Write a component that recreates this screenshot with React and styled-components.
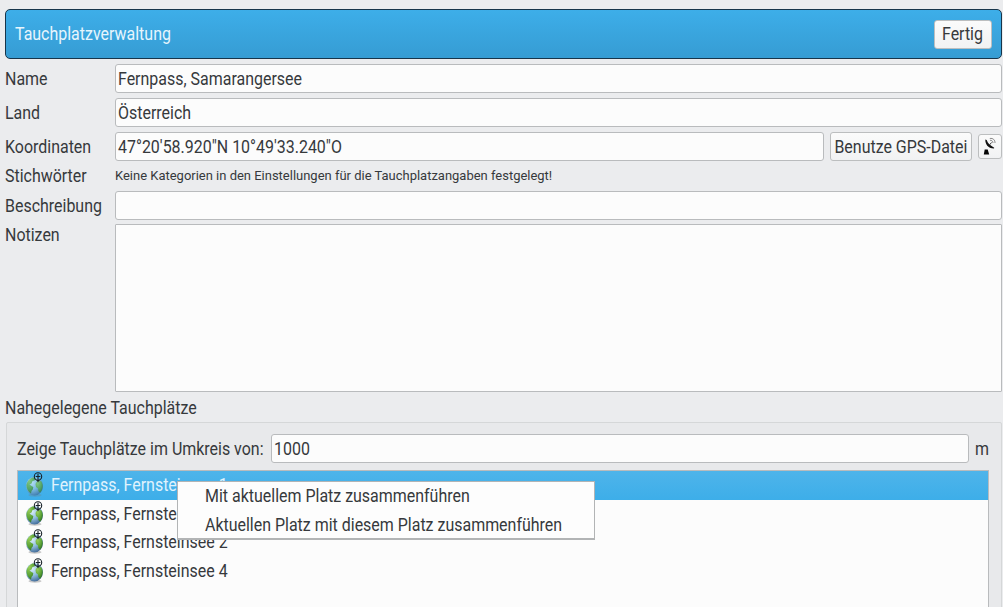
import React from "react";
import styled, { createGlobalStyle } from "styled-components";

const Global = createGlobalStyle`
  * { box-sizing: border-box; }
  html, body { margin: 0; height: 100%; overflow: hidden; background: #ebecee; }
  body { font-family: Roboto, "Liberation Sans", sans-serif; font-size: 17px; color: #36393c; }
`;

const Window = styled.main`
  width: 1003px;
  height: 607px;
  overflow: hidden;
  padding: 9px 1.5px 0 5px;
  display: flex;
  flex-direction: column;
`;

const Text = styled.span`
  display: inline-block;
  flex: none;
  font-size: ${(p) => p.$size || 17.5}px;
  line-height: ${(p) => p.$line || 22}px;
  white-space: nowrap;
  transform: translateY(-0.5px) scaleX(${(p) => p.$fit || 0.912});
  transform-origin: ${(p) => p.$origin || "left"} center;
`;

const TitleBar = styled.header`
  height: 50px;
  flex: none;
  display: flex;
  align-items: center;
  justify-content: space-between;
  padding: 0 9px 0 9px;
  border: 1px solid #17354a;
  border-radius: 5px;
  background: linear-gradient(#3daee9, #369cd3);
  color: #e6f5fd;
`;

const Button = styled.button`
  width: ${(p) => p.$w}px;
  height: ${(p) => p.$h}px;
  flex: none;
  padding: 0;
  display: flex;
  align-items: center;
  justify-content: center;
  border: 1px solid #bcbebf;
  border-radius: 3px;
  background: linear-gradient(#fbfbfb, #f1f2f3);
  color: #36393c;
  font-family: inherit;
`;

const Form = styled.section`
  flex: none;
  padding-top: 5px;
`;

const FormRow = styled.div`
  display: flex;
  align-items: ${(p) => (p.$top ? "flex-start" : "center")};
  height: ${(p) => p.$h}px;
  margin-bottom: ${(p) => p.$gap || 0}px;
`;

const Label = styled.label`
  width: 110px;
  flex: none;
  display: flex;
`;

const Field = styled.div`
  flex: 1;
  height: ${(p) => p.$h || 29}px;
  display: flex;
  align-items: center;
  padding-left: 2px;
  border: 1px solid #b9bbbd;
  border-radius: 3px;
  background: #fcfcfc;
`;

const Notes = styled(Field)`
  border-radius: 1px;
`;

const ButtonGroup = styled.div`
  display: flex;
  align-items: center;
  gap: 6px;
  margin-left: 6px;
`;

const SectionTitle = styled.h2`
  margin: 5px 0 0;
  height: 25px;
  font-weight: 400;
  display: flex;
  flex: none;
`;

const GroupBox = styled.section`
  flex: 1;
  margin: 0 0 -4px 1px;
  padding: 11px 12px 0 10px;
  display: flex;
  flex-direction: column;
  border: 1px solid #d5d7d8;
  border-radius: 2px;
  background: #e8e9eb;
`;

const RangeRow = styled.div`
  display: flex;
  align-items: center;
  height: 29px;
  flex: none;
`;

const RangeLabel = styled.div`
  width: 254px;
  flex: none;
  display: flex;
`;

const Unit = styled.div`
  width: 20px;
  padding-left: 6px;
  display: flex;
`;

const SiteList = styled.ul`
  position: relative;
  flex: 1;
  margin: 7px 0 0;
  padding: 0;
  list-style: none;
  border: 1px solid #b9bbbd;
  background: #fcfcfc;
`;

const Site = styled.li`
  height: 28.5px;
  display: flex;
  align-items: center;
  padding-left: 6.5px;
  background: ${(p) => (p.$selected ? "linear-gradient(#4eb4ea, #3daee9)" : "none")};
  color: ${(p) => (p.$selected ? "#e0f3fd" : "#36393c")};
  svg { flex: none; margin-right: 6.5px; }
`;

const Menu = styled.div`
  position: absolute;
  left: 159px;
  top: 10px;
  width: 418px;
  height: 59px;
  border: 1px solid #b2b4b5;
  border-bottom-width: 2px;
  background: #fdfdfd;
`;

const MenuItem = styled.div`
  height: 29px;
  display: flex;
  align-items: center;
  padding: 0 0 2px 27px;
`;

const Globe = ({ selected }) => (
  <svg width="20" height="28" viewBox="0 0 20 28">
    <defs>
      <radialGradient id="sea" cx=".35" cy=".3" r=".75">
        <stop offset="0" stopColor="#dceff9" />
        <stop offset=".5" stopColor="#93c0e0" />
        <stop offset="1" stopColor="#3d6795" />
      </radialGradient>
      <radialGradient id="land" cx=".3" cy=".2" r=".9">
        <stop offset="0" stopColor="#9bd05a" />
        <stop offset=".6" stopColor="#5aa236" />
        <stop offset="1" stopColor="#2c6a22" />
      </radialGradient>
    </defs>
    <g opacity={selected ? 0.72 : 1}>
      <ellipse cx="10" cy="24.2" rx="6.5" ry="1.6" fill="#777" opacity=".4" />
      <ellipse cx="9.5" cy="15.2" rx="8.4" ry="9.3" fill="url(#sea)" />
      <path d="M1.400 14C2 10.500 4.500 7.500 8 6.300L10.500 7.500 9.500 9.500 7.500 10 6.500 12.500 4.500 13.500 6.500 15 8.300 16 7.800 18.500 6.500 20 6 22.600C3.300 20.700 1.400 17.500 1.400 14Z" fill="url(#land)" />
      <path d="M11.500 11L14 9.500 16.500 10.500 17.700 14C17.900 17 17 20 15 21.800L13.300 20 13 17.500 11 16 10.500 13Z" fill="url(#land)" />
    </g>
    <g fill="none" stroke="#182229" strokeWidth="1.100">
      <circle cx="13" cy="5.500" r="3.700" />
      <path d="M13 2.700V9.200M10.700 5.500H15.300" />
      <path d="M11.500 9H14.500L13 11.500Z" fill="#182229" stroke="none" />
    </g>
  </svg>
);

const Dish = () => (
  <svg width="14" height="20" viewBox="0 0 14 20">
    <path d="M.800 17.500L1.700 12.500H4.700L6.200 17.500Z" fill="#050505" />
    <path d="M2.300 2.500C2.200 7 4.800 11.500 11 11.500L11.200 10.700C7.500 8.800 4.800 6.700 3.700 3.100Z" fill="#111" />
    <path d="M6.200 8.300L8.500 5.500" stroke="#222" strokeWidth=".9" />
    <path d="M7 3.300C8.700 3 10 4.300 10 6M6.800 1.500C10 .900 12.200 3 12 6" fill="none" stroke="#888" strokeWidth="1" />
  </svg>
);

const sites = [
  "Fernpass, Fernsteinsee 1",
  "Fernpass, Fernsteinsee 3",
  "Fernpass, Fernsteinsee 2",
  "Fernpass, Fernsteinsee 4",
];

export default function App() {
  return (
    <Window>
      <Global />
      <TitleBar>
        <Text>Tauchplatzverwaltung</Text>
        <Button $w={58} $h={29}><Text $origin="center">Fertig</Text></Button>
      </TitleBar>
      <Form>
        <FormRow $h={29} $gap={5}>
          <Label><Text>Name</Text></Label>
          <Field><Text>Fernpass, Samarangersee</Text></Field>
        </FormRow>
        <FormRow $h={29} $gap={5}>
          <Label><Text>Land</Text></Label>
          <Field><Text>Österreich</Text></Field>
        </FormRow>
        <FormRow $h={29} $gap={0}>
          <Label><Text>Koordinaten</Text></Label>
          <Field><Text>47°20'58.920"N 10°49'33.240"O</Text></Field>
          <ButtonGroup>
            <Button $w={142} $h={29}><Text $origin="center">Benutze GPS-Datei</Text></Button>
            <Button $w={24} $h={25}><Dish /></Button>
          </ButtonGroup>
        </FormRow>
        <FormRow $h={29} $gap={1}>
          <Label><Text>Stichwörter</Text></Label>
          <Text $size={13} $line={21} $fit={0.998}>Keine Kategorien in den Einstellungen für die Tauchplatzangaben festgelegt!</Text>
        </FormRow>
        <FormRow $h={29} $gap={4}>
          <Label><Text>Beschreibung</Text></Label>
          <Field />
        </FormRow>
        <FormRow $h={168} $top>
          <Label><Text>Notizen</Text></Label>
          <Notes $h={168} />
        </FormRow>
      </Form>
      <SectionTitle><Text>Nahegelegene Tauchplätze</Text></SectionTitle>
      <GroupBox>
        <RangeRow>
          <RangeLabel><Text>Zeige Tauchplätze im Umkreis von:</Text></RangeLabel>
          <Field><Text>1000</Text></Field>
          <Unit><Text>m</Text></Unit>
        </RangeRow>
        <SiteList>
          {sites.map((name, i) => (
            <Site key={name} $selected={i === 0}>
              <Globe selected={i === 0} />
              <Text>{name}</Text>
            </Site>
          ))}
          <Menu>
            <MenuItem><Text>Mit aktuellem Platz zusammenführen</Text></MenuItem>
            <MenuItem><Text>Aktuellen Platz mit diesem Platz zusammenführen</Text></MenuItem>
          </Menu>
        </SiteList>
      </GroupBox>
    </Window>
  );
}
